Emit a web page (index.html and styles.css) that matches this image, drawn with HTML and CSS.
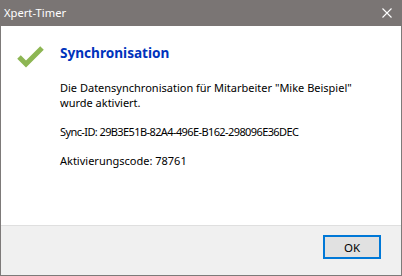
FILE: index.html
```html
<!DOCTYPE html>
<html lang="de">
<head>
  <meta charset="UTF-8">
  <meta name="viewport" content="width=device-width, initial-scale=1.0">
  <title>Xpert-Timer</title>
  <link rel="stylesheet" href="styles.css">
</head>
<body>
  <div class="window">
    <div class="titlebar">
      <span class="title">Xpert-Timer</span>
      <button class="close" aria-label="Schließen">
        <svg width="10" height="10" viewBox="0 0 10 10">
          <path d="M0.5 0.5 L9.5 9.5 M9.5 0.5 L0.5 9.5" stroke="#fff" stroke-width="1.1" fill="none"/>
        </svg>
      </button>
    </div>

    <div class="content">
      <svg class="check" width="30" height="26" viewBox="0 0 30 26">
        <polyline points="4,13 11,20 27,4" fill="none" stroke="#8db653" stroke-width="5" stroke-linecap="butt" stroke-linejoin="miter"/>
      </svg>
      <div class="text">
        <h1>Synchronisation</h1>
        <p>Die Datensynchronisation für Mitarbeiter "Mike Beispiel"<br>wurde aktiviert.</p>
        <p class="sync-id">Sync-ID: 29B3E51B-82A4-496E-B162-298096E36DEC</p>
        <p>Aktivierungscode: 78761</p>
      </div>
    </div>

    <div class="footer">
      <button class="ok">OK</button>
    </div>
  </div>
</body>
</html>
```

FILE: styles.css
```css
* {
  margin: 0;
  padding: 0;
  box-sizing: border-box;
  font-family: 'Noto Sans', 'Segoe UI', sans-serif;
}
body {
  background: #fff;
}
.window {
  width: 402px;
  height: 276px;
  border: 1px solid #7d7a79;
  border-top: none;
  display: flex;
  flex-direction: column;
}
.titlebar {
  height: 26px;
  margin: 0 -1px;
  background: #7a7574;
  color: #fff;
  display: flex;
  align-items: center;
  justify-content: space-between;
  padding: 0 10px 0 4px;
}
.title {
  font-size: 11.2px;
  padding-bottom: 1px;
}
.close {
  background: none;
  border: none;
  width: 10px;
  height: 10px;
  display: flex;
}
.content {
  flex: 1;
  display: flex;
  padding: 18px 0 0 14px;
  background: #fff;
}
.check {
  flex: none;
  margin-right: 15px;
}
.text {
  color: #000;
  font-size: 11px;
  line-height: 15px;
}
.text h1 {
  color: #0033bc;
  font-size: 13.6px;
  font-weight: bold;
  line-height: 18px;
  margin-bottom: 18px;
}
.text p {
  margin-bottom: 14px;
}
.text .sync-id {
  letter-spacing: -0.6px;
}
.footer {
  height: 50px;
  border-top: 1px solid #dfdfdf;
  background: #f0f0f0;
  display: flex;
  justify-content: flex-end;
  align-items: flex-start;
  padding: 9px 20px 0 0;
}
.ok {
  width: 58px;
  height: 24px;
  background: #e1e1e1;
  border: 2px solid #0078d7;
  font-size: 11.5px;
  color: #000;
}
```
